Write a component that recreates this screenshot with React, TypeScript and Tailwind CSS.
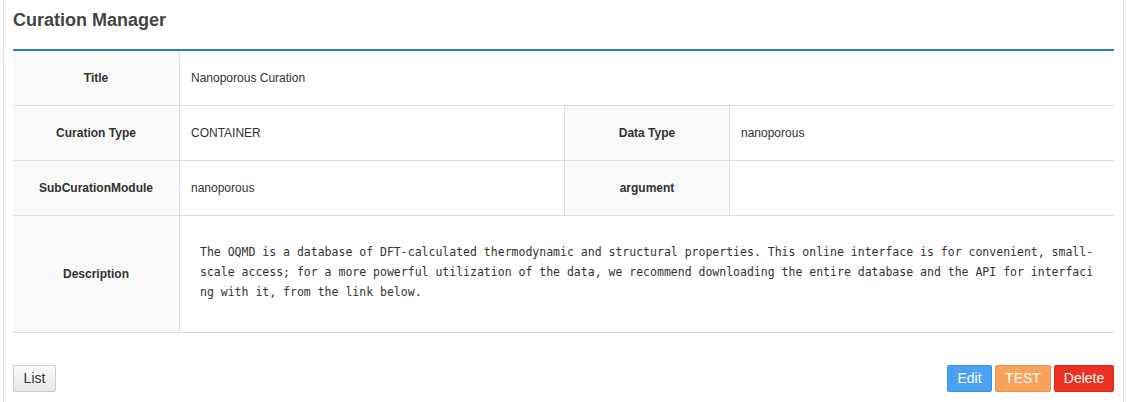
const sans = { fontFamily: '"Liberation Sans", Arial, sans-serif' };

const description =
  'The OQMD is a database of DFT-calculated thermodynamic and structural properties. This online interface is for convenient, small-scale access; for a more powerful utilization of the data, we recommend downloading the entire database and the API for interfacing with it, from the link below.';

function Label({ children, className = '' }: { children: React.ReactNode; className?: string }) {
  return (
    <div
      className={`flex items-center justify-center bg-[#f9f9f9] border-[#ddd] text-[12px] font-bold text-[#333] ${className}`}
    >
      {children}
    </div>
  );
}

function Value({ children, className = '' }: { children?: React.ReactNode; className?: string }) {
  return <div className={`flex items-center pl-[11px] text-[12px] text-[#333] ${className}`}>{children}</div>;
}

export default function App() {
  return (
    <div className="min-h-[402px] bg-white" style={sans}>
      <div className="mx-[3px] min-h-[402px] border-x border-[#e6e6e6] px-[9px]">
        <div className="h-[49px] pt-[10px]">
          <h2 className="text-[18px] leading-[20px] font-bold text-[#444]">Curation Manager</h2>
        </div>

        <div className="border-t-2 border-[#2a7bcf]">
          <div className="flex h-[55px] border-b border-[#ddd]">
            <Label className="w-[167px] border-r">Title</Label>
            <Value className="flex-1">Nanoporous Curation</Value>
          </div>
          <div className="flex h-[55px] border-b border-[#ddd]">
            <Label className="w-[167px] border-r">Curation Type</Label>
            <Value className="w-[384px]">CONTAINER</Value>
            <Label className="w-[166px] border-x">Data Type</Label>
            <Value className="flex-1">nanoporous</Value>
          </div>
          <div className="flex h-[55px] border-b border-[#ddd]">
            <Label className="w-[167px] border-r">SubCurationModule</Label>
            <Value className="w-[384px]">nanoporous</Value>
            <Label className="w-[166px] border-x">argument</Label>
            <Value className="flex-1" />
          </div>
          <div className="flex h-[117px] border-b border-[#ddd]">
            <Label className="w-[167px] border-r">Description</Label>
            <div className="flex flex-1 items-center pl-[20px] pb-[5px]">
              <pre
                className="w-[896px] whitespace-pre-wrap break-all text-[11.5px] leading-[20px] text-[#333]"
                style={{ fontFamily: '"DejaVu Sans Mono", "Liberation Mono", monospace' }}
              >
                {description}
              </pre>
            </div>
          </div>
        </div>

        <div className="flex items-center justify-between pt-[32px]">
          <button
            type="button"
            className="h-[27px] w-[43px] rounded-[2px] border border-[#ccc] bg-gradient-to-b from-[#fafafa] to-[#e8e8e8] text-[14px] text-[#333]"
          >
            List
          </button>
          <div className="flex gap-[3px]">
            <button
              type="button"
              className="h-[27px] w-[45px] rounded-[2px] border border-[#3d8fe0] bg-[#4aa1f2] text-[14px] text-white"
            >
              Edit
            </button>
            <button
              type="button"
              className="h-[27px] w-[56px] rounded-[2px] border border-[#e8944c] bg-[#f8a25b] text-[14px] text-white"
            >
              TEST
            </button>
            <button
              type="button"
              className="h-[27px] w-[60px] rounded-[2px] border border-[#d82a1b] bg-[#ee3020] text-[14px] text-white"
            >
              Delete
            </button>
          </div>
        </div>
      </div>
    </div>
  );
}
